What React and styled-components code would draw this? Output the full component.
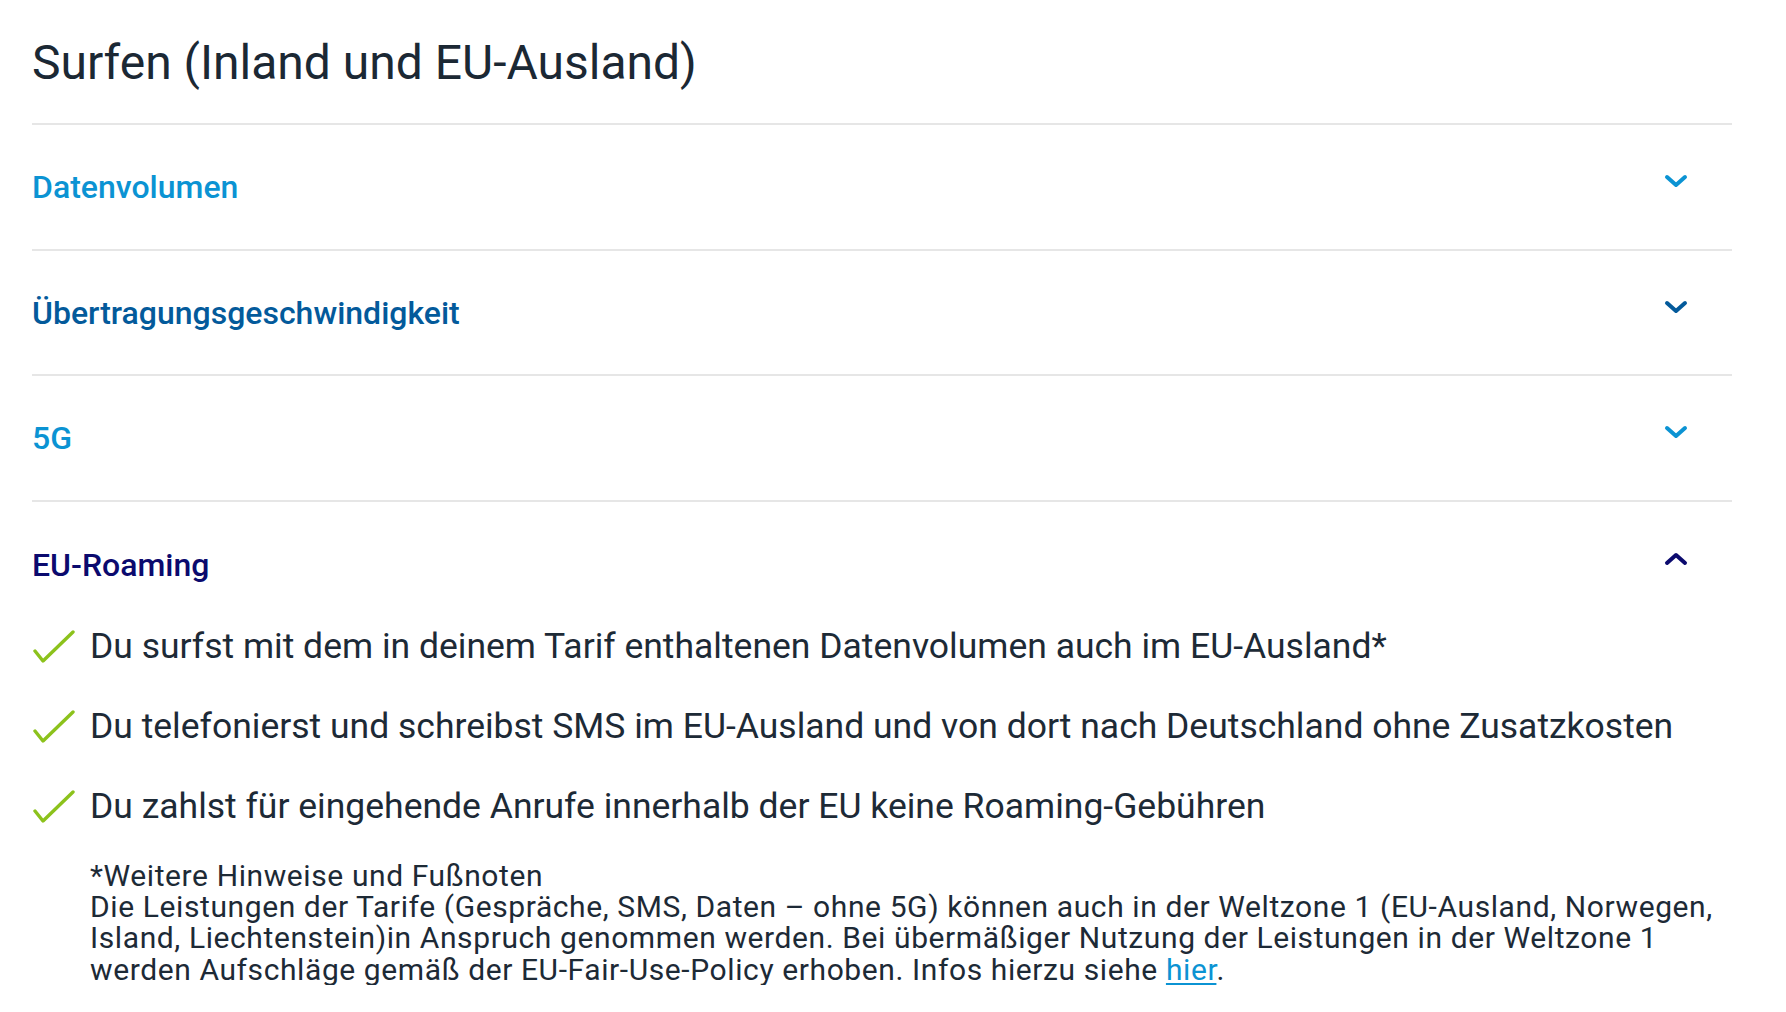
import React from "react";
import styled, { createGlobalStyle } from "styled-components";

const GlobalStyle = createGlobalStyle`
  html, body {
    margin: 0;
    padding: 0;
    background: #ffffff;
  }
  body {
    font-family: Roboto, "Noto Sans", "Liberation Sans", sans-serif;
    color: #1d2a36;
  }
`;

const sections = [
  { title: "Datenvolumen", color: "#0b93d3", open: false },
  { title: "Übertragungsgeschwindigkeit", color: "#035a9b", open: false },
  { title: "5G", color: "#0b93d3", open: false },
  { title: "EU-Roaming", color: "#0b0a6e", open: true },
];

const bullets = [
  "Du surfst mit dem in deinem Tarif enthaltenen Datenvolumen auch im EU-Ausland*",
  "Du telefonierst und schreibst SMS im EU-Ausland und von dort nach Deutschland ohne Zusatzkosten",
  "Du zahlst für eingehende Anrufe innerhalb der EU keine Roaming-Gebühren",
];

const Chevron = ({ up, color }) => (
  <ChevronSvg viewBox="0 0 26 16" width="26" height="16">
    <path
      d={up ? "M4 12 L13 4 L22 12" : "M4 4 L13 12 L22 4"}
      fill="none"
      stroke={color}
      strokeWidth="4"
      strokeLinecap="round"
      strokeLinejoin="round"
    />
  </ChevronSvg>
);

const Check = () => (
  <CheckSvg viewBox="0 0 44 34" width="44" height="34">
    <path
      d="M3 21 L11 31 L41 2"
      fill="none"
      stroke="#8cc21c"
      strokeWidth="3.4"
      strokeLinecap="round"
      strokeLinejoin="round"
    />
  </CheckSvg>
);

const App = () => {
  return (
    <>
      <GlobalStyle />
      <Page>
        <Title>Surfen (Inland und EU-Ausland)</Title>
        {sections.map((s) => (
          <Item key={s.title}>
            <Header $open={s.open}>
              <HeaderLabel $color={s.color}>{s.title}</HeaderLabel>
              <Chevron up={s.open} color={s.color} />
            </Header>
            {s.open && (
              <Content>
                <BulletList>
                  {bullets.map((b) => (
                    <Bullet key={b}>
                      <Check />
                      <BulletText>{b}</BulletText>
                    </Bullet>
                  ))}
                </BulletList>
                <Footnote>
                  *Weitere Hinweise und Fußnoten
                  <br />
                  Die Leistungen der Tarife (Gespräche, SMS, Daten – ohne 5G)
                  können auch in der Weltzone 1 (EU-Ausland, Norwegen, Island,
                  Liechtenstein)in Anspruch genommen werden. Bei übermäßiger
                  Nutzung der Leistungen in der Weltzone 1 werden Aufschläge
                  gemäß der EU-Fair-Use-Policy erhoben. Infos hierzu siehe{" "}
                  <FootLink href="#">hier</FootLink>.
                </Footnote>
              </Content>
            )}
          </Item>
        ))}
      </Page>
    </>
  );
};

const Page = styled.div`
  padding: 35px 54px 0 32px;
  box-sizing: border-box;
  width: 100%;
`;

const Title = styled.h1`
  margin: 0;
  padding-bottom: 32px;
  font-size: 48px;
  line-height: 56px;
  font-weight: 400;
  color: #1b2834;
`;

const Item = styled.section`
  border-top: 2px solid #e6e6e6;
`;

const Header = styled.div`
  display: flex;
  justify-content: space-between;
  align-items: flex-start;
  padding: ${(p) => (p.$open ? "43px 0 37px" : "42px 0 41.5px")};
  cursor: pointer;
`;

const HeaderLabel = styled.h3`
  margin: 0;
  font-size: 32px;
  line-height: 40px;
  font-weight: 500;
  color: ${(p) => p.$color};
`;

const ChevronSvg = styled.svg`
  display: block;
  margin: 6px 43px 0 0;
  flex-shrink: 0;
`;

const Content = styled.div`
  display: flex;
  flex-direction: column;
  gap: 30px;
`;

const BulletList = styled.ul`
  list-style: none;
  margin: 0;
  padding: 0;
  display: flex;
  flex-direction: column;
  gap: 32px;
`;

const Bullet = styled.li`
  display: flex;
  align-items: flex-start;
  gap: 14px;
`;

const CheckSvg = styled.svg`
  display: block;
  flex-shrink: 0;
  margin-top: 8px;
`;

const BulletText = styled.span`
  font-size: 35.5px;
  line-height: 48px;
  color: #1d2a36;
`;

const Footnote = styled.p`
  margin: 0 0 0 58px;
  font-size: 30px;
  line-height: 31.4px;
  letter-spacing: 0.6px;
  color: #1d2a36;
`;

const FootLink = styled.a`
  color: #0b93d3;
  text-decoration: underline;
  text-underline-offset: 3px;
`;

export default App;
